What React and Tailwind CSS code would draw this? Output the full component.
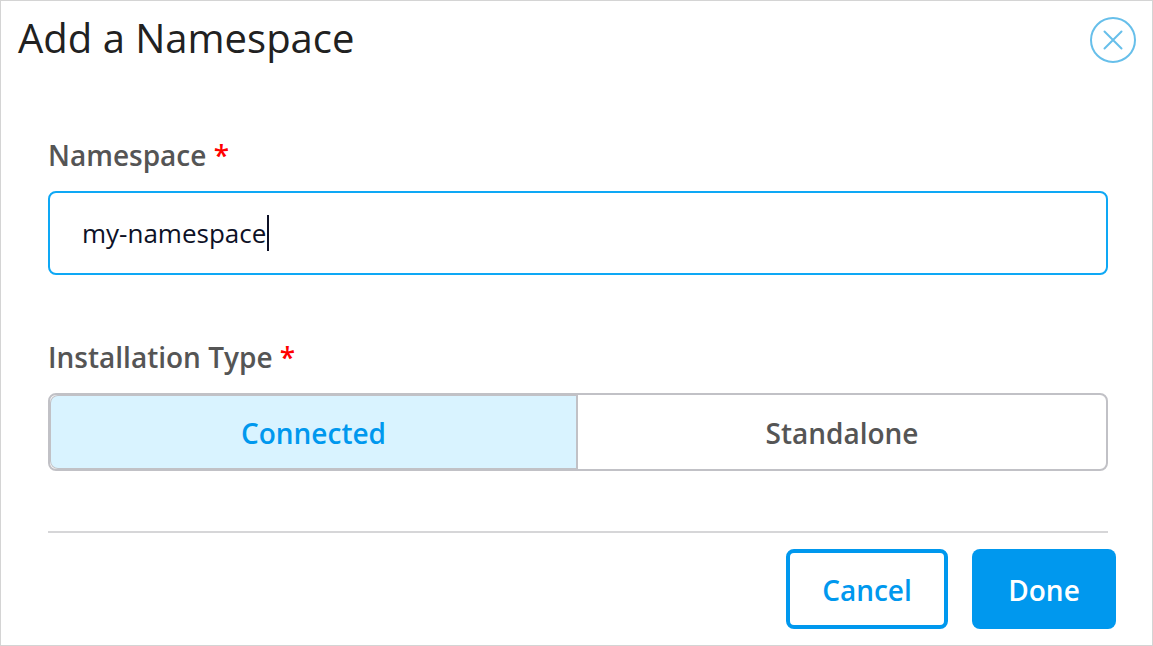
import { useState } from "react";

function Label({ children, ...props }) {
  return (
    <label className="block text-[28px] leading-9 font-semibold text-[#555]" {...props}>
      {children} <span className="text-[#ff0000]">*</span>
    </label>
  );
}

export default function App() {
  const [name, setName] = useState("my-namespace");
  const [type, setType] = useState("Connected");
  return (
    <main className="min-h-screen border border-[#d4d4d4] bg-white font-['Open_Sans',sans-serif]">
      <header className="flex items-start justify-between pt-4 pr-4 pl-[17px]">
        <h1 className="text-[40px] leading-[42px] text-[#212121]">Add a Namespace</h1>
        <button type="button" aria-label="Close" className="text-[#67bfea]">
          <svg width="46" height="46" viewBox="0 0 46 46" fill="none" stroke="currentColor" strokeWidth="2" strokeLinecap="round">
            <circle cx="23" cy="23" r="22" />
            <path d="M14.5 14.5 L31.5 31.5 M31.5 14.5 L14.5 31.5" />
          </svg>
        </button>
      </header>
      <form className="pt-[74px]" onSubmit={(e) => e.preventDefault()}>
        <div className="mr-11 ml-[47px]">
          <Label htmlFor="namespace">Namespace</Label>
          <div className="relative mt-[18px]">
            <input
              id="namespace"
              required
              value={name}
              onChange={(e) => setName(e.target.value)}
              className="block h-[84px] w-full rounded-lg border-2 border-[#0ea8f5] px-8 text-[26px] text-[#0d1126] outline-none"
            />
            <span className="absolute top-6 left-[219px] h-9 w-0.5 bg-[#0d1126]" />
          </div>
          <div className="mt-16">
            <Label id="type-label">Installation Type</Label>
            <div role="group" aria-labelledby="type-label" className="mt-[18px] grid h-[78px] grid-cols-2 rounded-lg border-2 border-[#c1c1c6]">
              {["Connected", "Standalone"].map((option) => (
                <button
                  key={option}
                  type="button"
                  aria-pressed={type === option}
                  onClick={() => setType(option)}
                  className="border-[#c1c1c6] pt-0.5 text-[28px] font-semibold text-[#555] first:rounded-l-lg first:border-r-2 last:rounded-r-lg aria-pressed:border-y aria-pressed:bg-[#d9f3ff] aria-pressed:text-[#0098ee] aria-pressed:first:border-l aria-pressed:last:border-r"
                >
                  {option}
                </button>
              ))}
            </div>
          </div>
          <hr className="mt-[60px] border-t-2 border-[#d6d6d8]" />
        </div>
        <footer className="mt-4 mr-9 flex justify-end gap-6 text-[28px] font-semibold">
          <button type="button" className="h-20 w-[162px] rounded-lg border-4 border-[#0098ee] pt-0.5 text-[#0098ee]">Cancel</button>
          <button type="submit" className="h-20 w-36 rounded-lg bg-[#0098ee] pt-0.5 text-white">Done</button>
        </footer>
      </form>
    </main>
  );
}
